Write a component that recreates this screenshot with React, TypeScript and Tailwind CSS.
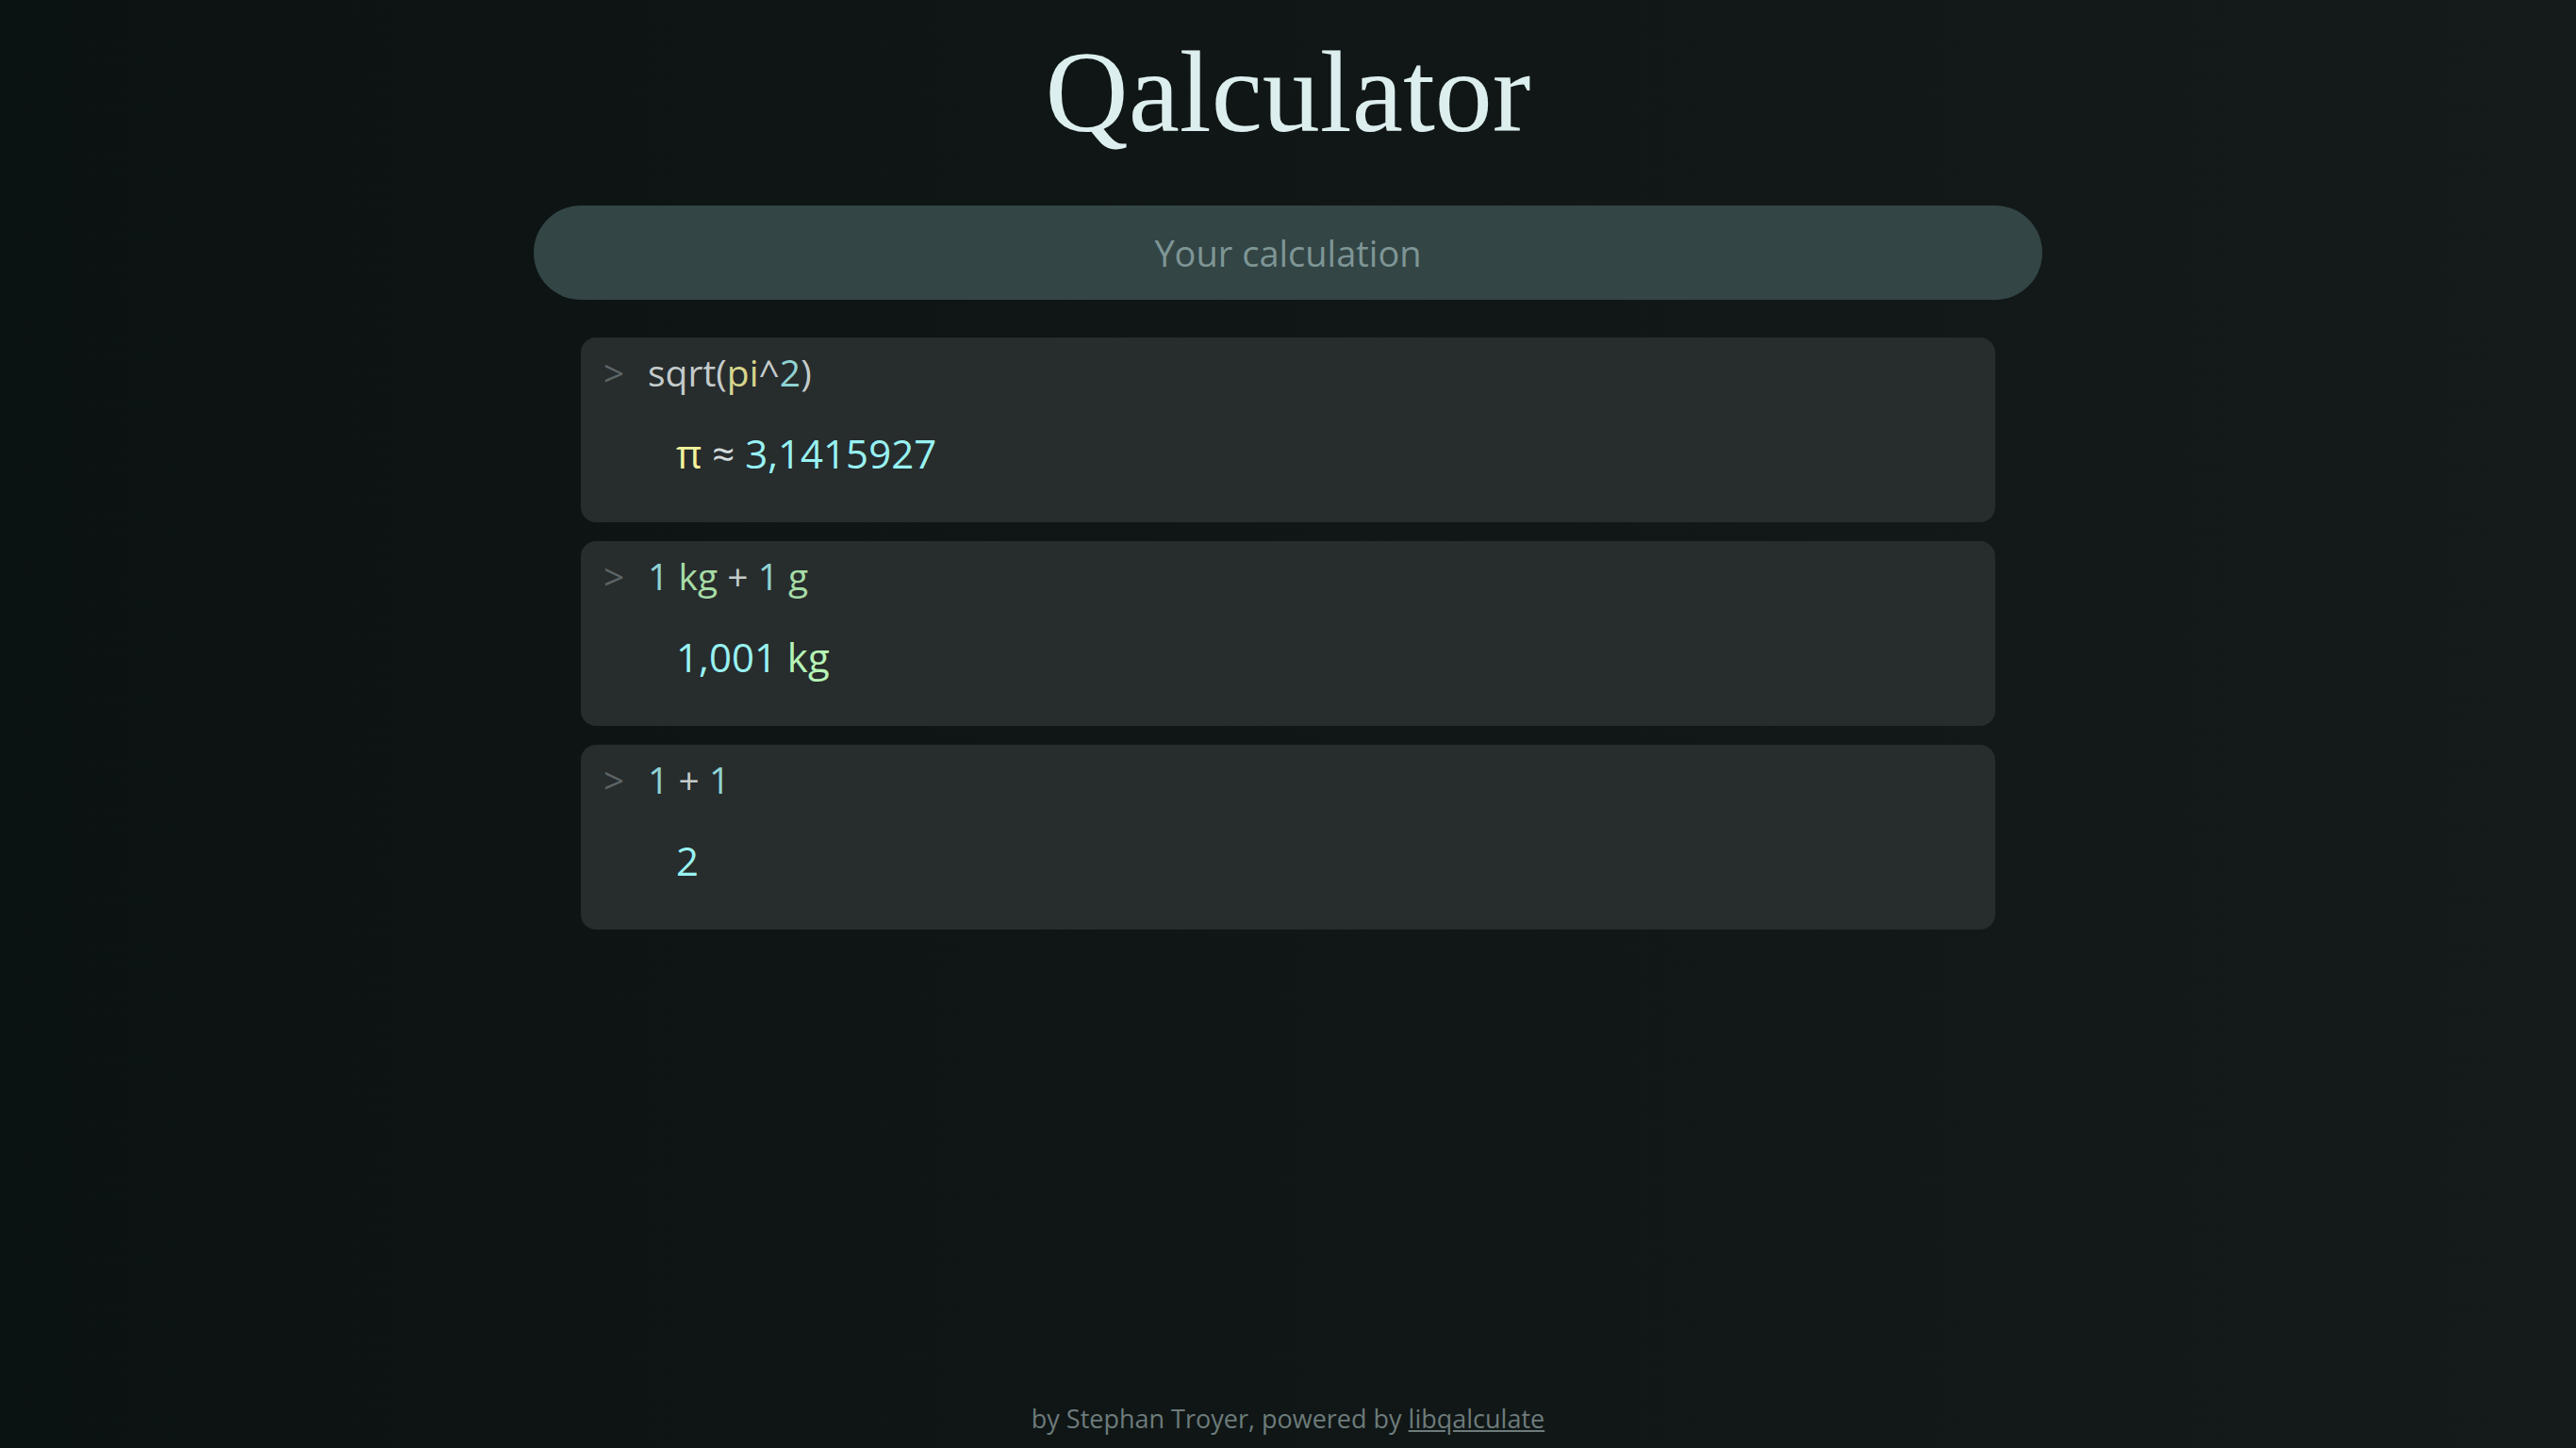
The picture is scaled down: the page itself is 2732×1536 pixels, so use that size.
import React from "react";

type Part = { text: string; color: string };

const history: { query: Part[]; result: Part[] }[] = [
  {
    query: [
      { text: "sqrt(", color: "text-[#c3cbcb]" },
      { text: "pi", color: "text-[#d6d68c]" },
      { text: "^", color: "text-[#c3cbcb]" },
      { text: "2", color: "text-[#8fd2d2]" },
      { text: ")", color: "text-[#c3cbcb]" },
    ],
    result: [
      { text: "π", color: "text-[#f4f49c]" },
      { text: " ≈ ", color: "text-[#d3dbdb]" },
      { text: "3,1415927", color: "text-[#98f2f2]" },
    ],
  },
  {
    query: [
      { text: "1", color: "text-[#8fd2d2]" },
      { text: " kg", color: "text-[#a6dca6]" },
      { text: " + ", color: "text-[#c3cbcb]" },
      { text: "1", color: "text-[#8fd2d2]" },
      { text: " g", color: "text-[#a6dca6]" },
    ],
    result: [
      { text: "1,001", color: "text-[#98f2f2]" },
      { text: " kg", color: "text-[#b6f4b6]" },
    ],
  },
  {
    query: [
      { text: "1", color: "text-[#8fd2d2]" },
      { text: " + ", color: "text-[#c3cbcb]" },
      { text: "1", color: "text-[#8fd2d2]" },
    ],
    result: [{ text: "2", color: "text-[#98f2f2]" }],
  },
];

export default function App() {
  return (
    <div className="min-h-screen w-full flex flex-col items-center bg-linear-to-r from-[#0b1312] to-[#151a1a] font-['Open_Sans',sans-serif]">
      {/* Title */}
      <h1 className="mt-[37px] text-[122px] leading-none text-[#dcefee] font-['Liberation_Serif',serif]">
        Qalculator
      </h1>

      {/* Input */}
      <input
        type="text"
        placeholder="Your calculation"
        className="mt-[59px] w-[1600px] h-[100px] rounded-full bg-[#334545] text-center text-[38px] text-[#dce6e6] placeholder:text-[#7e9595] outline-none"
      />

      {/* History */}
      <div className="mt-[40px] w-[1500px] flex flex-col gap-[20px]">
        {history.map((item, i) => (
          <div key={i} className="h-[196px] rounded-[16px] bg-[#272c2d] pl-[24px] pt-[12px]">
            <div className="flex text-[39px] leading-[50px]">
              <span className="w-[47px] text-[#5c6565]">&gt;</span>
              <span className="whitespace-pre">
                {item.query.map((p, j) => (
                  <span key={j} className={p.color}>
                    {p.text}
                  </span>
                ))}
              </span>
            </div>
            <div className="mt-[33px] pl-[77px] text-[42px] leading-[56px] whitespace-pre">
              {item.result.map((p, j) => (
                <span key={j} className={p.color}>
                  {p.text}
                </span>
              ))}
            </div>
          </div>
        ))}
      </div>

      {/* Footer */}
      <footer className="mt-auto pb-[11px] text-[27px] leading-[40px] text-[#6d7b7b]">
        by Stephan Troyer, powered by{" "}
        <a href="#" className="underline">
          libqalculate
        </a>
      </footer>
    </div>
  );
}
